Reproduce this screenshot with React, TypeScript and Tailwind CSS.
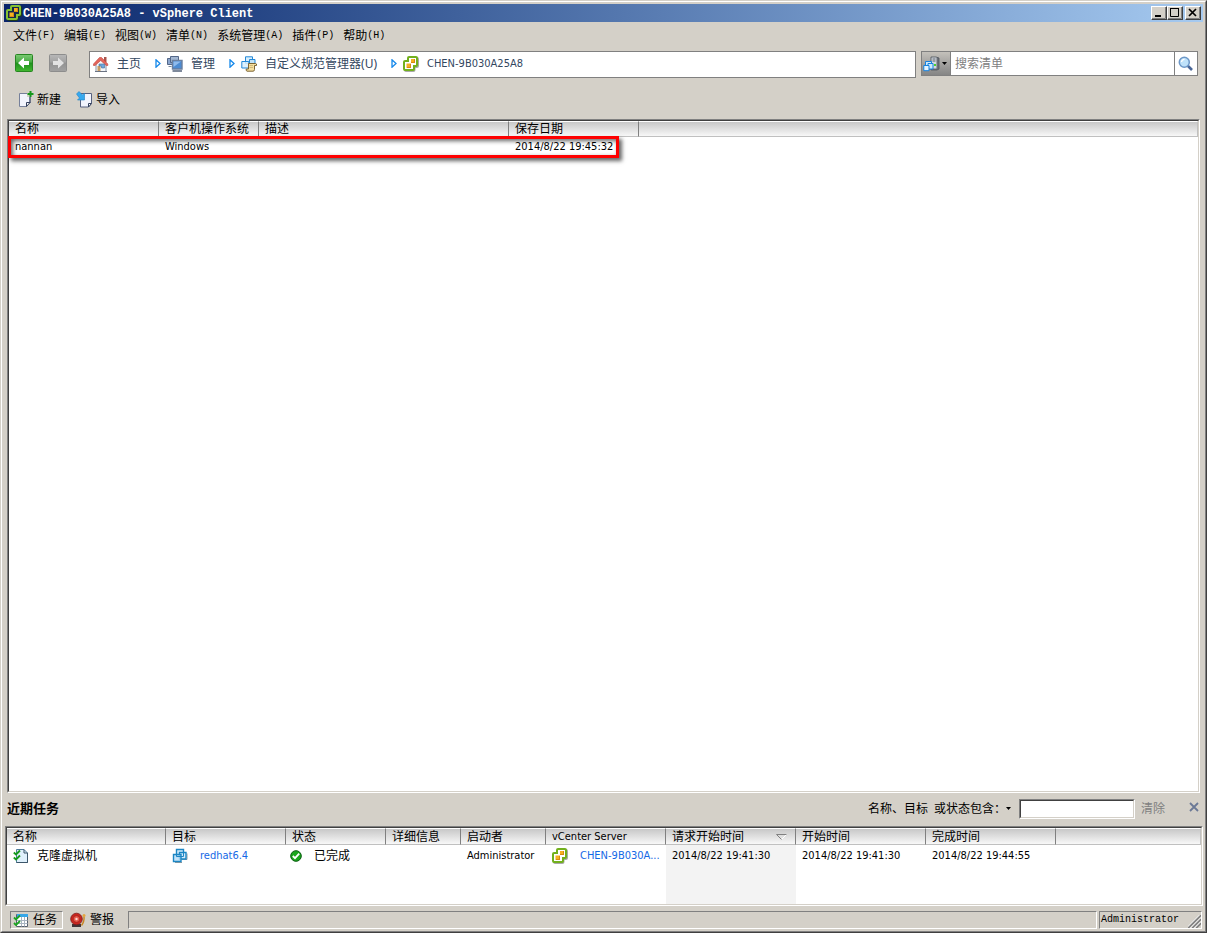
import type { ReactNode } from "react";

const MENUS = [
  { label: "文件", hotkey: "(F)" },
  { label: "编辑", hotkey: "(E)" },
  { label: "视图", hotkey: "(W)" },
  { label: "清单", hotkey: "(N)" },
  { label: "系统管理", hotkey: "(A)" },
  { label: "插件", hotkey: "(P)" },
  { label: "帮助", hotkey: "(H)" },
];

const SPECS = [
  { name: "nannan", os: "Windows", description: "", saved: "2014/8/22 19:45:32" },
];

const TASKS = [
  {
    name: "克隆虚拟机",
    target: "redhat6.4",
    status: "已完成",
    details: "",
    initiator: "Administrator",
    server: "CHEN-9B030A...",
    requested: "2014/8/22 19:41:30",
    started: "2014/8/22 19:41:30",
    completed: "2014/8/22 19:44:55",
  },
];

const SUNKEN_OUTER =
  "border border-t-[#808080] border-l-[#808080] border-r-white border-b-white";
const SUNKEN_INNER =
  "border border-t-[#404040] border-l-[#404040] border-r-[#d4d0c8] border-b-[#d4d0c8]";

function VCenterIcon({ dark = false }: { dark?: boolean }) {
  return (
    <svg width="16" height="16" viewBox="0 0 16 16" className="shrink-0">
      <path
        d="M6.500 2h7.500q1 0 1 1v7q0 1-1 1h-2.500v3q0 1-1 1H3q-1 0-1-1V7q0-1 1-1h2.500V3q0-1 1-1z"
        fill="none"
        stroke={dark ? "#1c3a1c" : "#a9a9a9"}
        strokeWidth="2"
      />
      <path
        d="M6 1h7q1 0 1 1v7q0 1-1 1h-2v3q0 1-1 1H2q-1 0-1-1V6q0-1 1-1h3V2q0-1 1-1z"
        fill={dark ? "#16264a" : "#fff"}
        stroke={dark ? "#86c232" : "#72b01d"}
        strokeWidth="2"
      />
      <path d="M8 3h4v4H8zM3.500 7.500H8V12H3.500z" fill="#f6b021" />
      <path d="M8 6h4v1H8zM4 11h4v1H4zM11 3h1v4h-1zM7 8h1v4H7z" fill="#d98a12" />
    </svg>
  );
}

function HomeIcon() {
  return (
    <svg width="16" height="16" viewBox="0 0 16 16" className="shrink-0">
      <path d="M3 7l4.500-4.500L13 7v8.500H3z" fill="#f4f7fb" stroke="#8794a8" />
      <path d="M11 1h2.500v5H11z" fill="#a8554c" />
      <path d="M.5 8L6.500 1.500h2L14.800 8v1.500h-1.500L7.700 4.500 2 9.500H.5z" fill="#e4665c" stroke="#bd4038" strokeWidth=".6" />
      <path d="M4.500 10h3v5.500h-3z" fill="#c69d66" />
      <path d="M6 8h5.500v4H8.500v-2H6z" fill="#6da9e0" stroke="#476c97" strokeWidth=".6" />
      <path d="M2 15.500h12" stroke="#6b7382" />
    </svg>
  );
}

function AdminIcon() {
  return (
    <svg width="16" height="16" viewBox="0 0 16 16" className="shrink-0">
      <path d="M.5 2.500h7v6h-7z" fill="#8aa5cd" stroke="#536788" />
      <path d="M3.500.5h8v6h-8z" fill="#a3b7d2" stroke="#536788" />
      <path d="M5.500 4.500h9.500v8.500H5.500z" fill="#4c8bd2" stroke="#6a7f9f" strokeWidth="1.400" />
      <path d="M6.500 5.500h7.500l-7.500 5.500z" fill="#8fbbed" />
      <path d="M5.500 15h9.500" stroke="#53627a" strokeWidth="1.500" />
      <path d="M1.500 10.500h3" stroke="#7b899e" />
    </svg>
  );
}

function SpecIcon() {
  return (
    <svg width="16" height="16" viewBox="0 0 16 16" className="shrink-0">
      <path d="M4.500.8h7v6.700h-7z" fill="#d8effd" stroke="#2388d8" />
      <path d="M8.500 3.500H14V9H8.500z" fill="#c0e2f8" stroke="#2388d8" />
      <path d="M.8 5.500h7v6.500h-7z" fill="#d8effd" fillOpacity=".85" stroke="#2388d8" />
      <path d="M7.500 7.500h7q1.500 0 1 2h-2v4q0 1.700-1.500 1.700h-6q-1.500-.7-.7-2.200h2.200z" fill="#f5dfa0" stroke="#7c6534" />
      <path d="M8.500 9.500h3.500M8.500 11.500h3.500" stroke="#c9ad6c" strokeWidth=".8" />
    </svg>
  );
}

function VmIcon() {
  return (
    <svg width="16" height="16" viewBox="0 0 16 16" className="shrink-0">
      <path d="M3 14.500h7M10 11.500h5v-6" fill="none" stroke="#9a9a9a" />
      <path d="M4.500 1.500h7v7h-7z" fill="#d3ebfb" stroke="#1b86c4" strokeWidth="1.400" />
      <path d="M7.500 4.500H14v6.500H7.500z" fill="#d3ebfb" stroke="#1b86c4" strokeWidth="1.400" />
      <path d="M1.500 6.500h7.500v7H1.500z" fill="#b4dcf7" fillOpacity=".8" stroke="#1b86c4" strokeWidth="1.400" />
      <path d="M4.500 6.500v2h7v-4" fill="none" stroke="#1b86c4" />
    </svg>
  );
}

function InventoryIcon() {
  return (
    <svg width="17" height="16" viewBox="0 0 17 16" className="shrink-0">
      <path d="M8 1h5l3 1v11l-2 1H8z" fill="#6c7078" stroke="#4d535c" strokeWidth=".8" />
      <path d="M8.500 1.500h5v11h-5z" fill="#d5dae1" />
      <path d="M9.500 3h3M9.500 5h3" stroke="#59616c" />
      <path d="M11 8h2v2h-2z" fill="#46d234" />
      <path d="M2.500 5.500h6v5h-6z" fill="#cdeafd" stroke="#1682e0" />
      <path d="M5 7.500h5V13H5z" fill="#cdeafd" stroke="#1682e0" />
      <path d="M.8 9.500h5.200v5.200H.8z" fill="#e4f4fe" stroke="#1682e0" />
    </svg>
  );
}

function NavButtonIcon({ disabled = false }: { disabled?: boolean }) {
  const id = disabled ? "nav-forward" : "nav-back";
  return (
    <svg width="18" height="18" viewBox="0 0 18 18">
      <defs>
        <linearGradient id={id} x1="0" y1="0" x2="0" y2="1">
          <stop offset="0" stopColor={disabled ? "#b8b8b8" : "#7ccb74"} />
          <stop offset=".45" stopColor={disabled ? "#a2a2a2" : "#48ab43"} />
          <stop offset=".5" stopColor={disabled ? "#929292" : "#1f921d"} />
          <stop offset="1" stopColor={disabled ? "#a2a2a2" : "#43b831"} />
        </linearGradient>
      </defs>
      <rect x=".5" y=".5" width="17" height="17" rx="1" fill={`url(#${id})`} stroke={disabled ? "#8d8d8d" : "#268521"} />
      <path
        d={disabled ? "M15 9L9 3.500V7H4v4h5v3.500z" : "M3 9l6-5.500V7h5v4H9v3.500z"}
        fill={disabled ? "#e2e2e2" : "#fff"}
      />
    </svg>
  );
}

function CrumbArrow() {
  return (
    <svg width="6" height="9" viewBox="0 0 6 9" className="mr-1.5 ml-3.5 shrink-0">
      <path d="M1 .8v7.400l4-3.700z" fill="#fff" stroke="#1387ea" strokeWidth="1.300" />
    </svg>
  );
}

function NewIcon() {
  return (
    <svg width="16" height="17" viewBox="0 0 16 17">
      <path d="M1.500 2.500h10.500v9l-3.500 4h-7z" fill="#f2f4fd" stroke="#76809a" />
      <path d="M12 11.500H8.500v4z" fill="#fff" stroke="#34405e" />
      <path d="M12 6v6" stroke="#34405e" />
      <path d="M9 0h7v6H9z" fill="#d4d0c8" />
      <path d="M12.500 0v6M9.500 3h6" stroke="#16971c" strokeWidth="2" />
    </svg>
  );
}

function ImportIcon() {
  return (
    <svg width="17" height="17" viewBox="0 0 17 17">
      <path d="M4.500 2.500h11v10l-3 3.500h-8z" fill="#f2f4fd" stroke="#56617f" />
      <path d="M15.500 12.500h-3V16z" fill="#fff" stroke="#34405e" />
      <path d="M.5 3L3 .5l3.500 3.500 2-2V9H1.500l2-2z" fill="#36a9ef" stroke="#1c7fc5" strokeWidth=".6" />
    </svg>
  );
}

function TaskIcon() {
  return (
    <svg width="16" height="16" viewBox="0 0 16 16" className="shrink-0">
      <path d="M3.500 1.500h7.500l3.500 3.500v9.500h-11z" fill="#dff0fc" stroke="#4f7c9c" />
      <path d="M11 1.500V5h3.500M14.500 5v9.500h-11" fill="none" stroke="#3c566a" />
      <path d="M.8 4.500L3 6.500 7 2.500M.8 9.500l2.200 2 4-4" fill="none" stroke="#179b1d" strokeWidth="1.900" />
    </svg>
  );
}

function TaskListIcon() {
  return (
    <svg width="16" height="16" viewBox="0 0 16 16" className="shrink-0">
      <path d="M3.500 2.500h11v12h-11z" fill="#fff" stroke="#57616e" />
      <path d="M4 2h11v3H4z" fill="#37a6e8" />
      <path d="M4 8.500h10.500M4 11.500h10.500M8.500 5v9.500M11.500 5v9.500" stroke="#a8b4c0" />
      <path d="M1 5.500l2 2 4-4M1 11l2 2 4-4" fill="none" stroke="#1ca522" strokeWidth="1.800" />
    </svg>
  );
}

function AlarmIcon() {
  return (
    <svg width="16" height="16" viewBox="0 0 16 16" className="shrink-0">
      <path d="M2 12h9v3H2z" fill="#3f3438" />
      <path d="M11.500 13.500q3-4 2.500-9" fill="none" stroke="#c78523" strokeWidth="1.400" />
      <circle cx="14" cy="3.500" r="1.500" fill="#e4a43c" />
      <circle cx="6.500" cy="7" r="5.800" fill="#c9261f" stroke="#7c1b19" strokeWidth=".8" />
      <circle cx="6.500" cy="7" r="3.300" fill="#e85a4c" stroke="#931d1a" strokeWidth=".6" />
      <circle cx="6.500" cy="7" r="1.200" fill="#fbdad3" />
    </svg>
  );
}

function DoneIcon() {
  return (
    <svg width="12" height="12" viewBox="0 0 12 12" className="shrink-0">
      <circle cx="6" cy="6" r="5.300" fill="#1aa71c" stroke="#0b5c12" />
      <path d="M2.800 6L5 8.200 9.200 3.700" fill="none" stroke="#fff" strokeWidth="1.800" />
    </svg>
  );
}

function SearchIcon() {
  return (
    <svg width="16" height="16" viewBox="0 0 16 16">
      <path d="M9.500 9.500l4.500 4.500" stroke="#4a6798" strokeWidth="2.600" />
      <circle cx="6.300" cy="6.300" r="5" fill="#bfe2fa" stroke="#6d98c8" strokeWidth="1.500" />
      <path d="M3.500 6q.3-2.500 3-2.700" fill="none" stroke="#fff" strokeWidth="1.300" />
    </svg>
  );
}

function DownArrow() {
  return (
    <svg width="5" height="3" viewBox="0 0 5 3" className="shrink-0">
      <path d="M0 0h5L2.500 3z" fill="#000" />
    </svg>
  );
}

function WindowButton({ label, children }: { label: string; children: ReactNode }) {
  return (
    <button
      type="button"
      aria-label={label}
      className="h-3.5 w-4 border border-t-white border-r-[#404040] border-b-[#404040] border-l-white bg-[#d4d0c8]"
    >
      <svg width="14" height="12" viewBox="0 0 14 12">
        <path d="M13.500 0v11.500H0" fill="none" stroke="#808080" />
        {children}
      </svg>
    </button>
  );
}

function Crumb({ icon, children }: { icon: ReactNode; children: ReactNode }) {
  return (
    <a href="#" className="flex items-center gap-2 whitespace-nowrap text-[#33475f]">
      {icon}
      <span>{children}</span>
    </a>
  );
}

function HeaderCell({ children, sorted = false }: { children?: ReactNode; sorted?: boolean }) {
  return (
    <th className="h-4 border-t border-r border-b border-t-white border-r-[#808080] border-b-[#c0c0c0] bg-linear-to-b from-[#c8c8c8] to-[#f8f8f8] p-0 pl-1.5 text-left font-normal last:border-r-[#c0c0c0]">
      <span className="flex h-3.5 items-center justify-between pr-2 leading-[14px] whitespace-nowrap">
        {children}
        {sorted && (
          <svg width="11" height="6" viewBox="0 0 11 6">
            <path d="M10.500.5L5.500 5.500" stroke="#fff" />
            <path d="M5.500 5.500L.5.500h10" fill="none" stroke="#808080" />
          </svg>
        )}
      </span>
    </th>
  );
}

function TitleBar() {
  return (
    <header className="flex h-[18px] items-center bg-linear-to-r from-[#0a246a] to-[#a6caf0] pr-0.5 pl-0.5">
      <VCenterIcon dark />
      <h1 className="ml-px flex-1 pt-px font-['Liberation_Mono',monospace] text-xs font-bold whitespace-nowrap text-white">
        CHEN-9B030A25A8 - vSphere Client
      </h1>
      <WindowButton label="最小化">
        <path d="M3 8h6v2H3z" fill="#000" />
      </WindowButton>
      <WindowButton label="最大化">
        <path d="M2.500 1v8.500h8V1M2 1.500h9" fill="none" stroke="#000" />
      </WindowButton>
      <div className="w-0.5" />
      <WindowButton label="关闭">
        <path d="M3 2l7 7M10 2L3 9" stroke="#000" strokeWidth="1.700" />
      </WindowButton>
    </header>
  );
}

function SpecTable() {
  return (
    <main className={`mx-[3px] flex flex-1 ${SUNKEN_OUTER}`}>
      <div className={`relative flex-1 bg-white ${SUNKEN_INNER}`}>
        <table className="w-full table-fixed border-separate border-spacing-0">
          <colgroup>
            <col className="w-[150px]" />
            <col className="w-[100px]" />
            <col className="w-[250px]" />
            <col className="w-[130px]" />
            <col />
          </colgroup>
          <thead>
            <tr>
              <HeaderCell>名称</HeaderCell>
              <HeaderCell>客户机操作系统</HeaderCell>
              <HeaderCell>描述</HeaderCell>
              <HeaderCell>保存日期</HeaderCell>
              <HeaderCell />
            </tr>
          </thead>
          <tbody>
            {SPECS.map((spec) => (
              <tr key={spec.name} className="h-5 font-['DejaVu_Sans_Condensed','Noto_Sans',sans-serif] text-[11px]">
                <td className="p-0 pl-1.5">{spec.name}</td>
                <td className="p-0 pl-1.5">{spec.os}</td>
                <td className="p-0 pl-1.5">{spec.description}</td>
                <td className="p-0 pl-1.5 whitespace-nowrap">{spec.saved}</td>
                <td />
              </tr>
            ))}
          </tbody>
        </table>
        {/* highlight around the saved specification */}
        <div className="pointer-events-none absolute top-[15px] -left-px h-[22px] w-[611px] border-3 border-[#fe0000] shadow-[3px_3px_4px_#0009,inset_2px_2px_4px_#0009]" />
      </div>
    </main>
  );
}

function TaskTable() {
  return (
    <section className={`ml-px flex min-h-20 ${SUNKEN_OUTER}`}>
      <div className={`flex flex-1 bg-white ${SUNKEN_INNER}`}>
        <table className="w-full table-fixed border-separate border-spacing-0">
          <colgroup>
            <col className="w-[159px]" />
            <col className="w-[120px]" />
            <col className="w-[100px]" />
            <col className="w-[75px]" />
            <col className="w-[85px]" />
            <col className="w-[120px]" />
            <col className="w-[130px]" />
            <col className="w-[130px]" />
            <col className="w-[130px]" />
            <col />
          </colgroup>
          <thead>
            <tr className="h-[17px]">
              <HeaderCell>名称</HeaderCell>
              <HeaderCell>目标</HeaderCell>
              <HeaderCell>状态</HeaderCell>
              <HeaderCell>详细信息</HeaderCell>
              <HeaderCell>启动者</HeaderCell>
              <HeaderCell>
                <span className="font-['DejaVu_Sans_Condensed','Noto_Sans',sans-serif] text-[11px]">
                  vCenter Server
                </span>
              </HeaderCell>
              <HeaderCell sorted>请求开始时间</HeaderCell>
              <HeaderCell>开始时间</HeaderCell>
              <HeaderCell>完成时间</HeaderCell>
              <HeaderCell />
            </tr>
          </thead>
          <tbody>
            {TASKS.map((task) => (
              <tr
                key={task.name}
                className="h-[22px] font-['DejaVu_Sans_Condensed','Noto_Sans_CJK_SC',sans-serif] text-[11px] whitespace-nowrap"
              >
                <td className="p-0 pl-1.5">
                  <div className="flex items-center gap-2 text-xs">
                    <TaskIcon />
                    {task.name}
                  </div>
                </td>
                <td className="p-0 pl-1.5">
                  <div className="flex items-center gap-3">
                    <VmIcon />
                    <a href="#" className="text-[#1468e6]">{task.target}</a>
                  </div>
                </td>
                <td className="p-0 pl-1">
                  <div className="flex items-center gap-3 text-xs">
                    <DoneIcon />
                    {task.status}
                  </div>
                </td>
                <td className="p-0 pl-1.5">{task.details}</td>
                <td className="p-0 pl-1.5">{task.initiator}</td>
                <td className="p-0 pl-1.5">
                  <div className="flex items-center gap-3">
                    <VCenterIcon />
                    <a href="#" className="text-[#1468e6]">{task.server}</a>
                  </div>
                </td>
                <td className="bg-[#f3f3f3] p-0 pl-1.5">{task.requested}</td>
                <td className="p-0 pl-1.5">{task.started}</td>
                <td className="p-0 pl-1.5">{task.completed}</td>
                <td />
              </tr>
            ))}
            <tr>
              <td colSpan={6} />
              <td className="bg-[#f3f3f3]" />
              <td colSpan={3} />
            </tr>
          </tbody>
        </table>
      </div>
    </section>
  );
}

export default function App() {
  return (
    <div className="flex min-h-screen border border-t-[#d4d0c8] border-r-[#404040] border-b-[#404040] border-l-[#d4d0c8] bg-[#d4d0c8] font-['Noto_Sans','Noto_Sans_CJK_SC',sans-serif] text-xs text-black">
      <div className="flex min-w-0 flex-1 flex-col border border-t-white border-r-[#808080] border-b-[#808080] border-l-white p-0.5">
        <TitleBar />

        <nav className="flex h-[26px] items-center gap-[9px] pt-0.5 pl-[9px]">
          {MENUS.map((menu) => (
            <button key={menu.label} type="button" className="flex items-center whitespace-nowrap">
              {menu.label}
              <span className="font-['Liberation_Mono',monospace] text-[10px]">{menu.hotkey}</span>
            </button>
          ))}
        </nav>

        <div className="mt-[3px] flex items-start pr-[5px] pl-[11px]">
          <div className="flex w-[74px] gap-4 pt-[3px]">
            <button type="button" aria-label="后退">
              <NavButtonIcon />
            </button>
            <button type="button" aria-label="前进" disabled>
              <NavButtonIcon disabled />
            </button>
          </div>
          <div className="mr-[5px] flex h-[27px] min-w-0 flex-1 items-center border border-[#808080] bg-white pb-0.5 pl-[3px]">
            <Crumb icon={<HomeIcon />}>主页</Crumb>
            <CrumbArrow />
            <Crumb icon={<AdminIcon />}>管理</Crumb>
            <CrumbArrow />
            <Crumb icon={<SpecIcon />}>自定义规范管理器(U)</Crumb>
            <CrumbArrow />
            <Crumb icon={<VCenterIcon />}>
              <span className="font-['DejaVu_Sans_Condensed','Noto_Sans',sans-serif] text-[11px]">
                CHEN-9B030A25A8
              </span>
            </Crumb>
          </div>
          <div className="flex h-[25px] w-[277px] border border-[#808080] bg-white">
            <button
              type="button"
              aria-label="搜索范围"
              className="flex w-[29px] items-center gap-0.5 border-r border-[#808080] bg-linear-to-b from-[#c4c1bb] to-[#858585] pl-px"
            >
              <InventoryIcon />
              <DownArrow />
            </button>
            <input
              type="text"
              aria-label="搜索清单"
              placeholder="搜索清单"
              className="min-w-0 flex-1 px-1 outline-none placeholder:text-[#808080]"
            />
            <button
              type="button"
              aria-label="搜索"
              className="flex w-[23px] items-center justify-center border-l border-[#808080]"
            >
              <SearchIcon />
            </button>
          </div>
        </div>

        <div className="flex h-[41px] items-center gap-[15px] pt-0.5 pl-3.5">
          <button type="button" className="flex items-center gap-[3px]">
            <NewIcon />
            新建
          </button>
          <button type="button" className="flex items-center gap-[3px]">
            <ImportIcon />
            导入
          </button>
        </div>

        <SpecTable />

        <div className="flex h-[33px] items-center pr-1 pb-0.5 pl-[3px]">
          <h2 className="flex-1 text-[13px] font-bold">近期任务</h2>
          <label htmlFor="task-filter" className="flex gap-1.5 whitespace-nowrap">
            <span>名称、目标</span>
            <span>或状态包含：</span>
          </label>
          <button type="button" aria-label="筛选条件">
            <DownArrow />
          </button>
          <div className={`mr-1.5 ml-2 w-[116px] ${SUNKEN_OUTER}`}>
            <input
              id="task-filter"
              type="text"
              className={`block h-[18px] w-full bg-white px-1 outline-none ${SUNKEN_INNER}`}
            />
          </div>
          <button type="button" disabled className="text-[#808080]">
            清除
          </button>
          <button type="button" aria-label="关闭面板" className="ml-6 pb-1">
            <svg width="10" height="10" viewBox="0 0 10 10">
              <path d="M1 1l8 8M9 1L1 9" stroke="#6a7896" strokeWidth="1.800" />
            </svg>
          </button>
        </div>

        <TaskTable />

        <footer className="mt-[5px] flex h-[18px] items-stretch pr-px pl-1.5">
          <button type="button" className={`flex w-[53px] items-center gap-1 pl-0.5 ${SUNKEN_OUTER}`}>
            <TaskListIcon />
            任务
          </button>
          <button type="button" className="ml-[7px] flex w-[58px] items-center gap-1">
            <AlarmIcon />
            警报
          </button>
          <div className={`mr-0.5 flex-1 ${SUNKEN_OUTER}`} />
          <div className={`flex w-[103px] items-center justify-between pl-px ${SUNKEN_OUTER}`}>
            <span className="font-['Liberation_Mono',monospace] text-[10px]">Administrator</span>
            <svg width="13" height="13" viewBox="0 0 13 13" className="self-end">
              <path d="M0 13L13 0M4 13l9-9M8 13l5-5" stroke="#808080" strokeWidth="2" />
              <path d="M-1.500 13L13-1.500M2.500 13L13 2.500M6.500 13L13 6.500" stroke="#fff" />
            </svg>
          </div>
        </footer>
      </div>
    </div>
  );
}
